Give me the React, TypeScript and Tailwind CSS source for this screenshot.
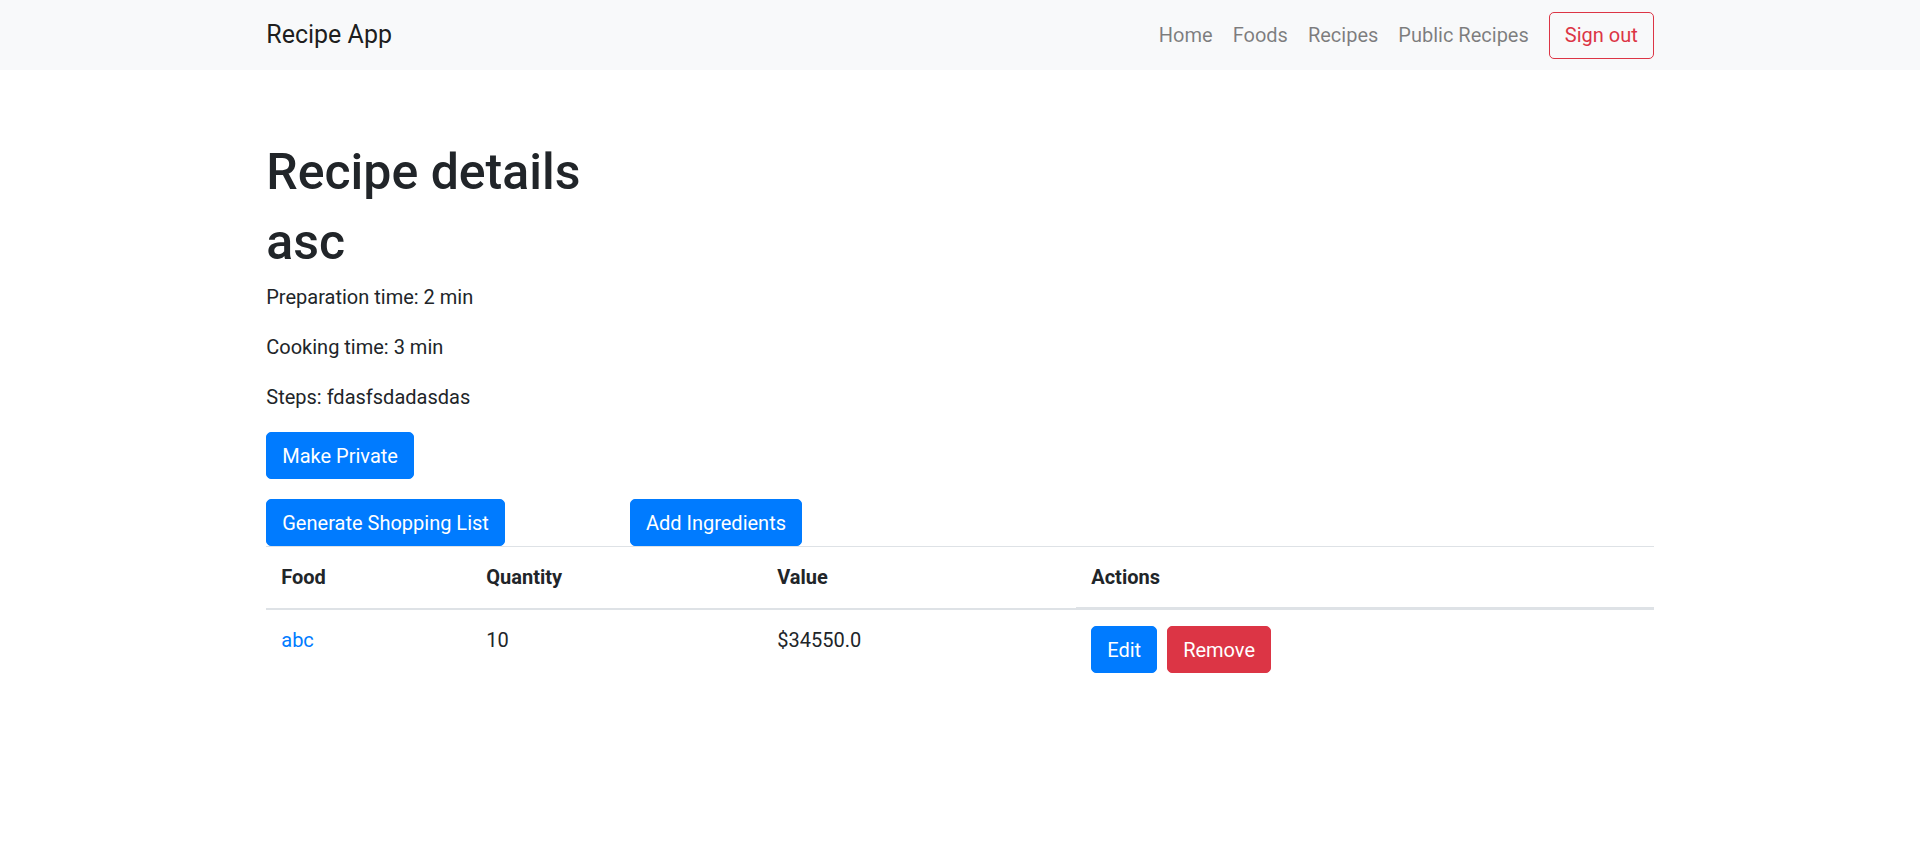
import React from 'react'

const navLinks = ['Home', 'Foods', 'Recipes', 'Public Recipes']

const btn =
    "inline-block border border-solid rounded-[5px] px-[15px] py-[7.5px] text-[20px] leading-[30px] text-white"

export default function App() {
    return (
        <div className="min-h-screen bg-white font-['Roboto','Liberation_Sans',sans-serif] text-[#212529] text-[20px] leading-[30px]">
            {/* Navbar */}
            <nav className="bg-[#f8f9fa] h-[70px]">
                <div className="w-[1387.5px] mx-auto h-full flex items-center justify-between">
                    <a className="text-[25px] leading-[37.5px] text-black/90">Recipe App</a>
                    <div className="flex items-center">
                        {navLinks.map((l) => (
                            <a key={l} className="px-[10px] text-black/50">
                                {l}
                            </a>
                        ))}
                        <button className="ml-[10px] inline-block border border-solid border-[#dc3545] rounded-[5px] px-[15px] py-[7.5px] text-[20px] leading-[30px] text-[#dc3545] bg-transparent">
                            Sign out
                        </button>
                    </div>
                </div>
            </nav>

            {/* Content */}
            <main className="w-[1387.5px] mx-auto pt-[72px]">
                <h1 className="text-[50px] leading-[60px] font-medium mb-[10px]">Recipe details</h1>
                <h1 className="text-[50px] leading-[60px] font-medium mb-[10px]">asc</h1>
                <p className="mb-[20px]">Preparation time: 2 min</p>
                <p className="mb-[20px]">Cooking time: 3 min</p>
                <p className="mb-[20px]">Steps: fdasfsdadasdas</p>

                <button className={btn + " bg-[#007bff] border-[#007bff] mb-[20px]"}>Make Private</button>

                <div className="flex items-end">
                    <button className={btn + " bg-[#007bff] border-[#007bff]"}>Generate Shopping List</button>
                    <button className={btn + " bg-[#007bff] border-[#007bff] ml-[125px]"}>Add Ingredients</button>
                </div>

                <table className="w-full border-collapse text-left">
                    <thead>
                        <tr>
                            <th className="w-[205px] p-[15px] border-t border-t-[#dee2e6] border-b-2 border-b-[#dee2e6] font-bold">Food</th>
                            <th className="w-[291px] p-[15px] border-t border-t-[#dee2e6] border-b-2 border-b-[#dee2e6] font-bold">Quantity</th>
                            <th className="w-[314px] p-[15px] border-t border-t-[#dee2e6] border-b-2 border-b-[#dee2e6] font-bold">Value</th>
                            <th className="p-[15px] border-t border-t-[#dee2e6] border-b-[3px] border-b-[#dee2e6] font-bold">Actions</th>
                        </tr>
                    </thead>
                    <tbody>
                        <tr>
                            <td className="px-[15px] pt-[15px] align-top">
                                <a className="text-[#007bff]">abc</a>
                            </td>
                            <td className="px-[15px] pt-[15px] align-top">10</td>
                            <td className="px-[15px] pt-[15px] align-top">$34550.0</td>
                            <td className="px-[15px] pt-[16px] pb-[15px] align-top">
                                <div className="flex gap-[10px]">
                                    <button className={btn + " bg-[#007bff] border-[#007bff]"}>Edit</button>
                                    <button className={btn + " bg-[#dc3545] border-[#dc3545]"}>Remove</button>
                                </div>
                            </td>
                        </tr>
                    </tbody>
                </table>
            </main>
        </div>
    )
}
